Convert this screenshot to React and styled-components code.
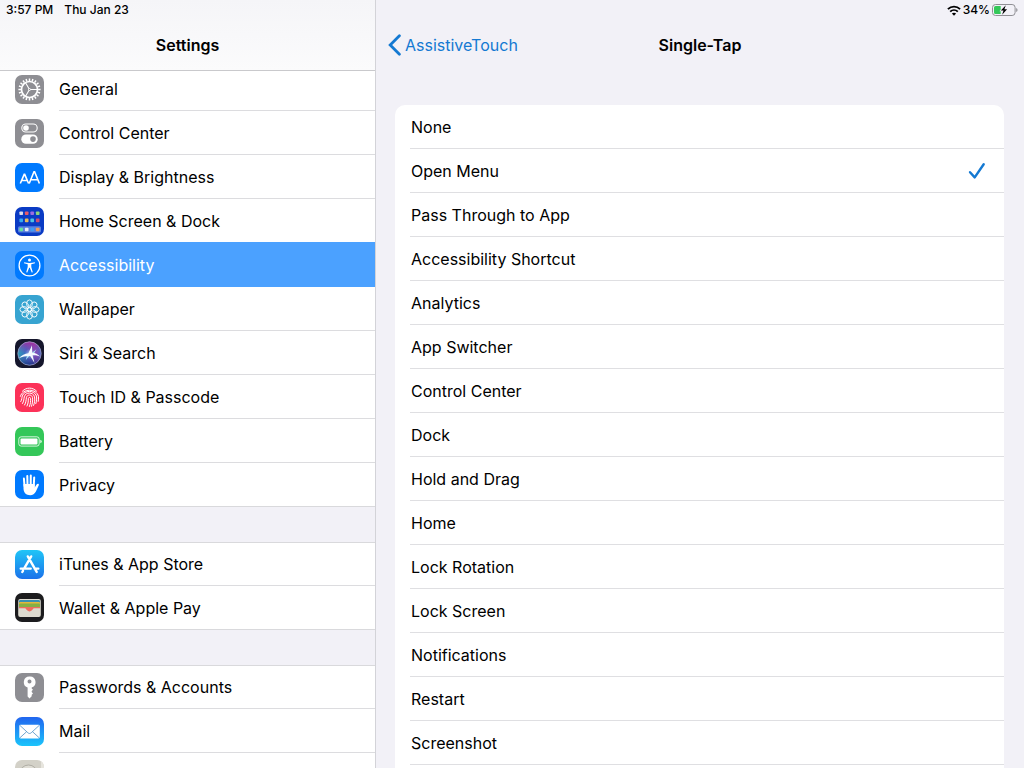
import React, { useState } from "react";
import styled, { createGlobalStyle, css } from "styled-components";

const GlobalStyle = createGlobalStyle`
  * {
    box-sizing: border-box;
  }
  body {
    margin: 0;
    font-family: Inter, "Liberation Sans", sans-serif;
    font-size: 16px;
    line-height: 20px;
    color: #000;
    background: #f2f1f7;
  }
`;

const Screen = styled.div`
  display: flex;
  height: 100vh;
  overflow: hidden;
`;

const Sidebar = styled.aside`
  flex: 0 0 376px;
  display: flex;
  flex-direction: column;
  border-right: 1px solid #d3d3d8;
`;

const SidebarHeader = styled.header`
  z-index: 1;
  flex: none;
  height: 71px;
  background: linear-gradient(#f5f5f8, #fbfbfc);
  border-bottom: 1px solid #c9c9cc;
`;

const StatusBar = styled.div`
  display: flex;
  align-items: center;
  justify-content: ${({ $end }) => ($end ? "flex-end" : "flex-start")};
  gap: ${({ $end }) => ($end ? "2px" : "11px")};
  height: 20px;
  padding: 0 6px;
  font-size: 12px;
  font-weight: 500;
`;

const TitleBar = styled.div`
  display: grid;
  grid-template-columns: 1fr auto 1fr;
  align-items: center;
  height: 50px;
  padding: 0 12px;
`;

const Title = styled.h1`
  grid-column: 2;
  margin: 0;
  font-size: 16px;
  font-weight: 600;
`;

const BackLink = styled.a`
  display: flex;
  align-items: center;
  gap: 4px;
  color: #1479d2;
  text-decoration: none;
`;

const SettingsNav = styled.nav`
  flex: 1;
  min-height: 0;
  margin-top: -4px;
  overflow: hidden;
`;

const Group = styled.ul`
  margin: 0 0 35px;
  padding: 0;
  list-style: none;
  background: #fff;
  border-top: 1px solid #d9d9dc;
`;

const Label = styled.span`
  flex: 1;
  display: flex;
  align-items: center;
  border-bottom: 1px solid #dcdcdf;
`;

const SettingsLink = styled.a`
  display: flex;
  gap: 15px;
  height: 44px;
  padding-left: 15px;
  color: inherit;
  text-decoration: none;

  svg {
    flex: none;
    align-self: center;
    border-radius: 7px;
  }

  ${({ $selected }) =>
    $selected &&
    css`
      position: relative;
      height: 45px;
      margin-top: -1px;
      padding-top: 1px;
      background: #4ba1ff;
      color: #fff;

      ${Label} {
        border-color: transparent;
      }
    `}
`;

const SettingsItem = styled.li`
  &:first-child ${SettingsLink} {
    height: 43px;
  }
  &:last-child ${SettingsLink} {
    border-bottom: 1px solid #d9d9dc;
  }
  &:last-child ${Label} {
    border-bottom: 0;
  }
`;

const Main = styled.main`
  flex: 1;
  min-width: 0;
  display: flex;
  flex-direction: column;
`;

const OptionList = styled.fieldset`
  flex: 1;
  margin: 35px 20px 0 19px;
  padding: 0;
  border: 0;
  border-radius: 10px 10px 0 0;
  background: #fff;
`;

const Option = styled.label`
  display: flex;
  align-items: center;
  justify-content: space-between;
  height: 44px;
  margin-left: 15px;
  padding: 0 18px 0 1px;
  border-bottom: 1px solid #dfdfe2;
`;

const OptionInput = styled.input`
  position: absolute;
  opacity: 0;
  margin: 0;
`;

const Tile = ({ bg, children }) => (
  <svg width="29" height="29" viewBox="0 0 29 29" aria-hidden="true">
    <rect width="29" height="29" fill={bg} />
    {children}
  </svg>
);

const GeneralIcon = () => (
  <Tile bg="#8e8e93">
    <g stroke="#fff" fill="none">
      {Array.from({ length: 20 }, (_, i) => (
        <path key={i} d="M14.5 3.4V6" strokeWidth="1.5" transform={`rotate(${i * 18} 14.5 14.5)`} />
      ))}
      <circle cx="14.5" cy="14.5" r="8" strokeWidth="1.7" />
      <path d="M14.5 14.5H22M14.5 14.5l-3.8-6.6M14.5 14.5l-3.8 6.6" strokeWidth="1.1" />
      <circle cx="14.5" cy="14.5" r="1" fill="#8e8e93" strokeWidth="1" />
    </g>
  </Tile>
);

const ControlCenterIcon = () => (
  <Tile bg="#8e8e93">
    <rect x="6.8" y="5" width="15.4" height="8" rx="4" fill="none" stroke="#fff" strokeWidth="1.1" />
    <circle cx="11" cy="9" r="2.8" fill="#fff" />
    <rect x="6.3" y="15.5" width="16.4" height="9.3" rx="4.65" fill="#fff" />
    <circle cx="18" cy="20.1" r="2.8" fill="#8e8e93" />
  </Tile>
);

const DisplayIcon = () => (
  <Tile bg="#007aff">
    <g fill="none" stroke="#fff" strokeWidth="1.6">
      <path d="M5.3 20.5 9.2 11.4h.5l3.9 9.1M6.6 17.5h5.7" />
      <path d="M14.2 20.5 19 8.8h.6l4.8 11.7M15.8 16.7h7" />
    </g>
  </Tile>
);

const dots = [
  ["#d9dcec", "#e85a68", "#9b6de0", "#8bd67b"],
  ["#35a8ef", "#e7b95a", "#4fc3e0", "#c84f75"],
  ["#63dfa0", "#e6eaf7", "#3d9cf5", "#f19a57"],
];

const HomeScreenIcon = () => (
  <Tile bg="#0a3bc4">
    <rect x="3" y="19.3" width="23" height="6.3" rx="1.5" fill="#5a80df" />
    {dots.map((row, y) =>
      row.map((fill, x) => (
        <rect key={`${x}-${y}`} x={4.4 + x * 5.5} y={[4.4, 11.6, 20.7][y]} width="3.6" height="3.6" rx="0.8" fill={fill} />
      ))
    )}
  </Tile>
);

const AccessibilityIcon = () => (
  <Tile bg="#007aff">
    <circle cx="14.5" cy="14.5" r="10.4" fill="none" stroke="#fff" strokeWidth="1.3" />
    <circle cx="14.5" cy="9" r="1.5" fill="#fff" />
    <path
      d="M9.2 11.2c3.4.9 7.2.9 10.6 0l.2 1.1-3.7.9v2.7l1.5 5.3-1.1.3-1.9-4.8h-.6l-1.9 4.8-1.1-.3 1.5-5.3v-2.7L9 12.3z"
      fill="#fff"
    />
  </Tile>
);

const WallpaperIcon = () => (
  <Tile bg="#37a4d1">
    <g fill="none" stroke="#fff" strokeWidth="0.9">
      {Array.from({ length: 8 }, (_, i) => (
        <ellipse key={i} cx="14.5" cy="8.8" rx="2.9" ry="3.9" transform={`rotate(${i * 45} 14.5 14.5)`} />
      ))}
      <circle cx="14.5" cy="14.5" r="2" />
    </g>
  </Tile>
);

const SiriIcon = () => (
  <Tile bg="#15162c">
    <defs>
      <linearGradient id="siri" x1="0" y1="0.6" x2="1" y2="0.4">
        <stop offset="0" stopColor="#1fb0b8" />
        <stop offset="0.4" stopColor="#3d62c4" />
        <stop offset="0.75" stopColor="#8a48b5" />
        <stop offset="1" stopColor="#3f70c3" />
      </linearGradient>
      <linearGradient id="siriShade" x1="0" y1="0" x2="0" y2="1">
        <stop offset="0" stopColor="#b02595" stopOpacity="0.8" />
        <stop offset="0.5" stopColor="#7558b8" stopOpacity="0.1" />
        <stop offset="1" stopColor="#0c2a75" stopOpacity="0.85" />
      </linearGradient>
      <radialGradient id="siriGlow">
        <stop offset="0" stopColor="#fff" />
        <stop offset="1" stopColor="#9fe6ff" stopOpacity="0" />
      </radialGradient>
    </defs>
    <circle cx="14.5" cy="14.5" r="11.7" fill="url(#siri)" />
    <circle cx="14.5" cy="14.5" r="11.7" fill="url(#siriShade)" stroke="#a8a6cf" strokeWidth="0.7" />
    <circle cx="15" cy="15" r="5.5" fill="url(#siriGlow)" opacity="0.6" />
    <path
      d="M3.800 19.200c3-3 6-4.600 9.600-5L17 6.200l.2 7.300c3 .3 5.600 1.600 7.800 4-2.800-1-5-1.400-7.400-1.200l1.900 7.700-4.300-6.900c-4.200-.1-7.600.6-11.400 2.100z"
      fill="#f4fbff"
    />
    <path d="m14.200 17-3.400 4 1.200-4zM17.400 13.500l4-3.300-2.400 4z" fill="#a8e6f5" />
  </Tile>
);

const TouchIdIcon = () => (
  <Tile bg="#fc3259">
    <g fill="none" stroke="#fff" strokeWidth="1" strokeLinecap="round">
      <path d="M7.4 8.2c4-4.2 10.2-4.2 14.2 0" />
      <path d="M5.4 13.3C7.5 5.2 21.5 5 23.5 13.5c.2 2 .1 3.4-.3 4.9" />
      <path d="M5.8 18.5c1.3-2 .9-3.6 1.5-5.6C9.2 7 19.6 6.8 21.4 13c.5 2.8.2 5-.6 7.6" />
      <path d="M7.5 20.5c1.6-2.4 1.3-4.7 1.8-6.7 1.2-5 9-5 10.2 0 .6 3 .1 6-.9 8.6" />
      <path d="M9.6 22c1.6-2.8 1.5-5.1 1.8-7.4.6-3.4 5.6-3.4 6.1 0 .4 3.1-.1 6-1 8.7" />
      <path d="M12 23c1.5-3 1.2-5.2 1.4-7.6.2-1.3 2-1.3 2.1 0 .3 2.9 0 5.4-1.1 8.1" />
    </g>
  </Tile>
);

const BatteryIcon = () => (
  <Tile bg="#34c759">
    <rect x="3.8" y="9.8" width="20.4" height="9.3" rx="2.4" fill="none" stroke="#fff" strokeWidth="0.8" />
    <rect x="5.5" y="11.4" width="17" height="6.1" rx="1" fill="#fff" />
    <path d="M25.4 12.8c1.8.5 1.8 2.9 0 3.4z" fill="#fff" />
  </Tile>
);

const PrivacyIcon = () => (
  <Tile bg="#007aff">
    <g stroke="#fff" strokeWidth="2" strokeLinecap="round">
      <path d="M8.9 8.6 9.5 16M12.3 6.1l.2 9M15.8 5.6l-.1 9.5M19.2 7.4l-.5 9" />
    </g>
    <path
      d="M8.5 14h11.200v3.600l1.900-3c.9-1.300 2.700-.8 2.200.6l-2.900 6.300c-1.300 2.400-3.100 3.700-5.700 3.700-4 0-6.600-2.600-6.700-6.700z"
      fill="#fff"
    />
  </Tile>
);

const AppStoreIcon = () => (
  <Tile bg="url(#storeBg)">
    <defs>
      <linearGradient id="storeBg" x1="0" y1="0" x2="0" y2="1">
        <stop stopColor="#20c5f7" />
        <stop offset="1" stopColor="#1b72ea" />
      </linearGradient>
    </defs>
    <g stroke="#fff" strokeWidth="2.4" strokeLinecap="round" fill="none">
      <path d="m16.2 6.4-6.7 11.5M12.8 6.4l8.9 15.5M5.7 18.6h10M19.6 18.6h3.7M8 20.8l-.7 1.2" />
    </g>
  </Tile>
);

const WalletIcon = () => (
  <Tile bg="#1c1c1e">
    <rect x="3.2" y="6" width="22.6" height="18" rx="2" fill="#dedbd0" />
    <rect x="4" y="6.9" width="21" height="5" rx="1.4" fill="#3990b3" />
    <rect x="4" y="8.9" width="21" height="4" rx="1" fill="#e3b83c" />
    <rect x="4" y="10.5" width="21" height="4" rx="1" fill="#86b044" />
    <path d="M4 13.9h21v1.3h-5.8c-1.2 0-1.2.9-2 1.9-1.6 1.9-3.8 1.9-5.4 0-.8-1-.8-1.900-2-1.900H4z" fill="#ed6d60" />
  </Tile>
);

const KeyIcon = () => (
  <Tile bg="#8e8e93">
    <path
      fillRule="evenodd"
      d="M14.5 3.6a5.6 5.6 0 0 0-1.9 10.9v9l1.9 2 2.2-2.2v-1.5l1.3-1.3-1.3-1.4v-1l1.3-1.3-1.3-1.3v-1a5.6 5.6 0 0 0-2.2-10.9zm0 3a2 2 0 1 1 0 4 2 2 0 0 1 0-4z"
      fill="#fff"
    />
  </Tile>
);

const MailIcon = () => (
  <Tile bg="url(#mailBg)">
    <defs>
      <linearGradient id="mailBg" x1="0" y1="0" x2="0" y2="1">
        <stop stopColor="#2165ef" />
        <stop offset="1" stopColor="#1bc4fb" />
      </linearGradient>
    </defs>
    <rect x="4.3" y="7.7" width="20.5" height="13.7" rx="1.4" fill="#fff" />
    <path
      d="m4.8 8.3 8.1 7.5c1 .9 2.3.9 3.3 0l8.1-7.5M4.8 20.9l6.8-6.2M24.3 20.9l-6.8-6.2"
      fill="none"
      stroke="#4b8fc5"
      strokeWidth="0.8"
    />
  </Tile>
);

const ContactsIcon = () => (
  <Tile bg="#d3d1c8">
    <path d="M26 0h3v29h-3z" fill="#e7e5de" />
    <circle cx="13.5" cy="14" r="9" fill="#dfddd5" stroke="#aaa89f" strokeWidth="0.9" />
    <circle cx="13.5" cy="11.5" r="3.5" fill="#a9a79e" />
  </Tile>
);

const WifiIcon = () => (
  <svg width="14" height="11" viewBox="0 0 14 11" role="img" aria-label="Wi-Fi">
    <g fill="none" stroke="#000" strokeWidth="1.9">
      <path d="M.9 4.1c3.5-3.3 8.7-3.3 12.2 0" />
      <path d="M3.2 6.6c2.2-2 5.4-2 7.6 0" />
    </g>
    <path d="M4.9 8.6c1.2-1.1 3-1.1 4.2 0L7 10.8z" />
  </svg>
);

const ChargeIcon = () => (
  <svg width="26" height="12" viewBox="0 0 26 12" role="img" aria-label="Charging">
    <rect x="0.5" y="0.5" width="22.6" height="11" rx="3" fill="none" stroke="#8f8f94" />
    <path d="M3.6 2h5.1v8H3.6A1.6 1.6 0 0 1 2 8.4V3.6A1.6 1.6 0 0 1 3.6 2z" fill="#34c759" />
    <path d="M24.2 4c1.8.7 1.8 3.3 0 4z" fill="#8f8f94" />
    <path d="m13.8 1.3-5 5.3h2.7l-1.4 4.2 5-5.6h-2.7z" stroke="#f2f1f7" strokeWidth="1.2" paintOrder="stroke" />
  </svg>
);

const BackIcon = () => (
  <svg width="13" height="22" viewBox="0 0 13 22" aria-hidden="true">
    <path d="M11.4 1.8 2.2 11l9.2 9.2" fill="none" stroke="#1479d2" strokeWidth="2.8" strokeLinecap="round" />
  </svg>
);

const CheckIcon = () => (
  <svg width="18" height="18" viewBox="0 0 18 18" aria-hidden="true">
    <path
      d="m2 10.2 4.7 5.2L15.7 2.2"
      fill="none"
      stroke="#1479d2"
      strokeWidth="2.4"
      strokeLinecap="round"
      strokeLinejoin="round"
    />
  </svg>
);

const groups = [
  [
    { name: "General", Icon: GeneralIcon },
    { name: "Control Center", Icon: ControlCenterIcon },
    { name: "Display & Brightness", Icon: DisplayIcon },
    { name: "Home Screen & Dock", Icon: HomeScreenIcon },
    { name: "Accessibility", Icon: AccessibilityIcon },
    { name: "Wallpaper", Icon: WallpaperIcon },
    { name: "Siri & Search", Icon: SiriIcon },
    { name: "Touch ID & Passcode", Icon: TouchIdIcon },
    { name: "Battery", Icon: BatteryIcon },
    { name: "Privacy", Icon: PrivacyIcon },
  ],
  [
    { name: "iTunes & App Store", Icon: AppStoreIcon },
    { name: "Wallet & Apple Pay", Icon: WalletIcon },
  ],
  [
    { name: "Passwords & Accounts", Icon: KeyIcon },
    { name: "Mail", Icon: MailIcon },
    { Icon: ContactsIcon },
  ],
];

const options = [
  "None",
  "Open Menu",
  "Pass Through to App",
  "Accessibility Shortcut",
  "Analytics",
  "App Switcher",
  "Control Center",
  "Dock",
  "Hold and Drag",
  "Home",
  "Lock Rotation",
  "Lock Screen",
  "Notifications",
  "Restart",
  "Screenshot",
];

const App = () => {
  const [action, setAction] = useState("Open Menu");

  return (
    <Screen>
      <GlobalStyle />
      <Sidebar>
        <SidebarHeader>
          <StatusBar>
            <span>3:57 PM</span>
            <span>Thu Jan 23</span>
          </StatusBar>
          <TitleBar>
            <Title>Settings</Title>
          </TitleBar>
        </SidebarHeader>
        <SettingsNav>
          {groups.map((items, index) => (
            <Group key={index}>
              {items.map(({ name, Icon }, i) => (
                <SettingsItem key={i}>
                  <SettingsLink href="#" $selected={name === "Accessibility"}>
                    <Icon />
                    <Label>{name}</Label>
                  </SettingsLink>
                </SettingsItem>
              ))}
            </Group>
          ))}
        </SettingsNav>
      </Sidebar>
      <Main>
        <StatusBar $end>
          <WifiIcon />
          <span>34%</span>
          <ChargeIcon />
        </StatusBar>
        <TitleBar>
          <BackLink href="#">
            <BackIcon />
            AssistiveTouch
          </BackLink>
          <Title as="h2">Single-Tap</Title>
        </TitleBar>
        <OptionList aria-label="Single-Tap">
          {options.map((name) => (
            <Option key={name}>
              <OptionInput
                type="radio"
                name="single-tap"
                checked={action === name}
                onChange={() => setAction(name)}
              />
              {name}
              {action === name && <CheckIcon />}
            </Option>
          ))}
        </OptionList>
      </Main>
    </Screen>
  );
};

export default App;
